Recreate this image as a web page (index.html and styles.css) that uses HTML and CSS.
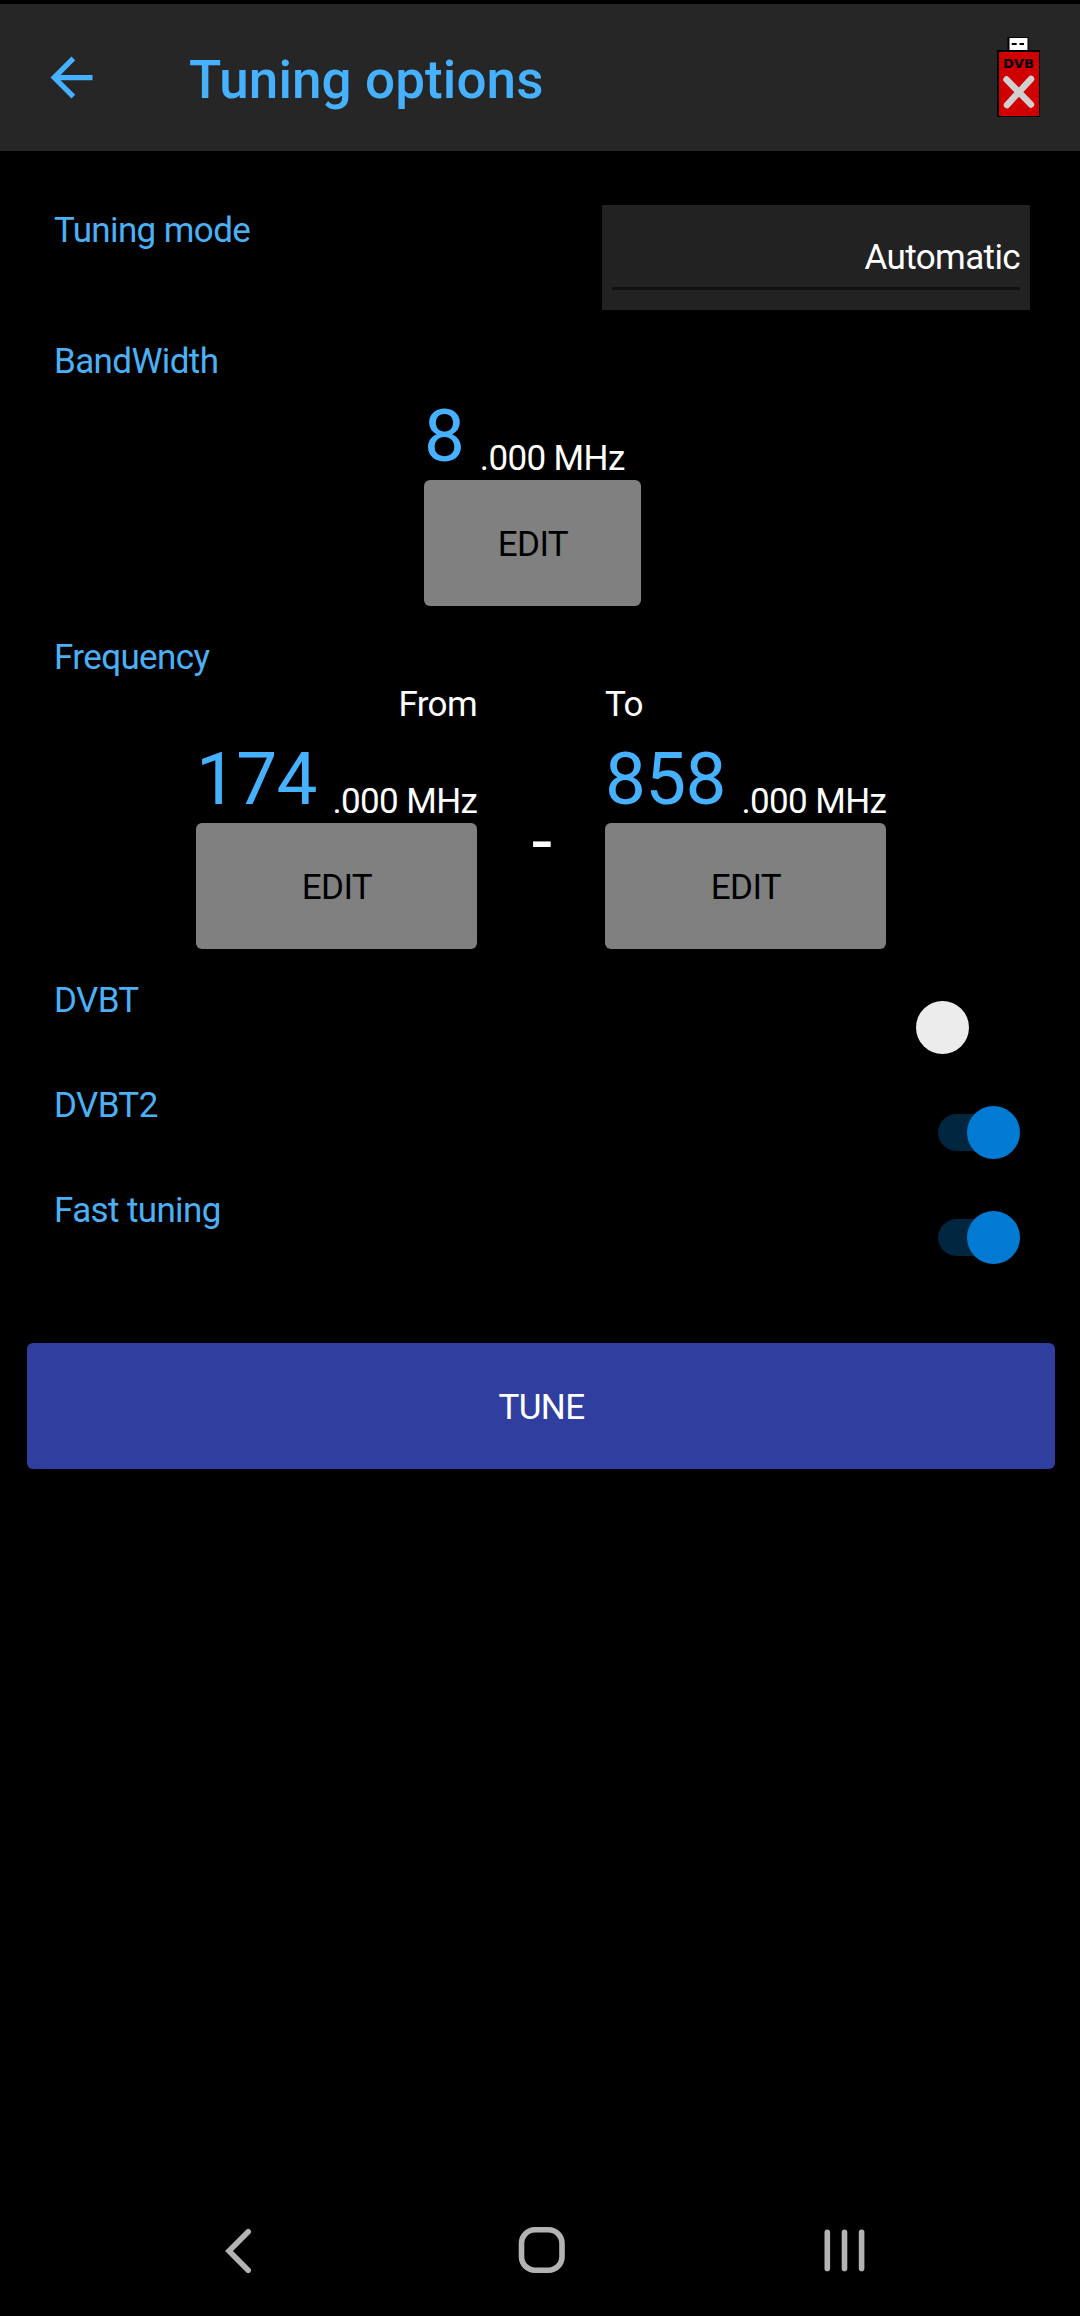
FILE: index.html
```html
<!DOCTYPE html>
<html lang="en">
<head>
<meta charset="utf-8">
<title>Tuning options</title>
<link rel="stylesheet" href="styles.css">
</head>
<body>
<header class="app-bar">
  <svg class="back" viewBox="0 0 24 24"><path d="M20 11H7.83l5.59-5.59L12 4l-8 8 8 8 1.41-1.41L7.83 13H20v-2z"/></svg>
  <h1 class="title">Tuning options</h1>
  <svg class="dongle" viewBox="0 0 43 80">
    <path d="M10.5 0h21v14h-21z" fill="#000"/>
    <path d="M12.5 1h18v12.5h-18z" fill="#fff"/>
    <path d="M14.7 6h5v2h-5zM22.5 6h4.5v2h-4.5z" fill="#000"/>
    <path d="M0 13h43v67H0z" fill="#000"/>
    <path d="M2 15h40v64H2z" fill="#d00000"/>
    <text class="dongle-text" x="6" y="30.7" textLength="31" lengthAdjust="spacingAndGlyphs">DVB</text>
    <path d="M9.5 42.5l24.5 25M34 42L10 68" stroke="#d0d0d0" stroke-width="6.5" stroke-linecap="round"/>
  </svg>
</header>
<main class="options">
  <section class="row row-mode">
    <span class="label">Tuning mode</span>
    <div class="spinner"><span class="spinner-value">Automatic</span></div>
  </section>
  <section class="row-bandwidth">
    <span class="label">BandWidth</span>
    <div class="field field-narrow">
      <div class="value"><span class="number">8</span><span class="unit">.000 MHz</span></div>
      <button class="edit">EDIT</button>
    </div>
  </section>
  <section class="row-frequency">
    <span class="label">Frequency</span>
    <div class="range">
      <div class="field">
        <span class="caption caption-end">From</span>
        <div class="value"><span class="number">174</span><span class="unit">.000 MHz</span></div>
        <button class="edit">EDIT</button>
      </div>
      <span class="dash">-</span>
      <div class="field">
        <span class="caption">To</span>
        <div class="value"><span class="number">858</span><span class="unit">.000 MHz</span></div>
        <button class="edit">EDIT</button>
      </div>
    </div>
  </section>
  <section class="row"><span class="label">DVBT</span><span class="switch"></span></section>
  <section class="row"><span class="label">DVBT2</span><span class="switch on"></span></section>
  <section class="row"><span class="label">Fast tuning</span><span class="switch on"></span></section>
</main>
<button class="tune">TUNE</button>
<nav class="nav-bar">
  <svg class="nav-icon" viewBox="0 0 60 60"><path d="M39.2 11.8L20 31l19.2 19.2"/></svg>
  <svg class="nav-icon" viewBox="0 0 60 60"><rect x="9.5" y="9.8" width="40.5" height="40.5" rx="13.5"/></svg>
  <svg class="nav-icon" viewBox="0 0 60 60"><path d="M13.3 12.2v36.2M30.5 12.2v36.2M47.6 12.2v36.2"/></svg>
</nav>
</body>
</html>
```
FILE: styles.css
```css
* { box-sizing: border-box; }

body {
  margin: 0;
  width: 1080px;
  height: 2316px;
  padding-top: 4px;
  display: flex;
  flex-direction: column;
  background: #000;
  color: #fff;
  font: 35px/42px Roboto, sans-serif;
  letter-spacing: -0.62px;
  overflow: hidden;
}

.app-bar {
  height: 147px;
  flex: none;
  display: flex;
  align-items: center;
  padding: 0 40px;
  background: #262626;
  color: #46b1ff;
}
.back { width: 63px; height: 63px; margin-top: -1px; fill: currentColor; }
.title {
  margin: 5px auto 0 86px;
  font-size: 53px;
  line-height: 62px;
  font-weight: 500;
  letter-spacing: 0.1px;
}
.dongle { width: 43px; height: 80px; margin-top: -1px; }
.dongle-text { font: bold 13px "DejaVu Sans", sans-serif; letter-spacing: 0; fill: #000; }

.options { padding: 54px 50px 0 54px; }
.label { display: block; padding-top: 5px; line-height: 42px; color: #4bb0f5; }

.row {
  height: 105px;
  display: flex;
  justify-content: space-between;
}
.row-mode { height: 131px; }
.row-bandwidth { height: 296px; }
.row-frequency { height: 343px; }

.spinner {
  width: 428px;
  height: 105px;
  padding: 32px 10px 20px;
  background: #222;
}
.spinner-value {
  display: block;
  height: 53px;
  border-bottom: 3px solid #111;
  text-align: right;
}

.field { width: 281px; display: flex; flex-direction: column; }
.field-narrow { width: 217px; margin: 9px 0 0 370px; }
.caption { margin: 5px 0 9px; }
.caption-end { text-align: right; }
.value {
  height: 88px;
  display: flex;
  align-items: flex-end;
  gap: 15.5px;
}
.number {
  font-size: 72.8px;
  line-height: 86px;
  padding-bottom: 1px;
  color: #46b1ff;
}
.unit { white-space: nowrap; }

.edit, .tune {
  height: 126px;
  flex: none;
  border: 0;
  border-radius: 6px;
  font: inherit;
  letter-spacing: inherit;
}
.edit { background: #808080; color: #000; padding: 4px 0 0 1px; }
.tune {
  margin: 53px 25px 0 27px;
  padding: 4px 0 0 1px;
  background: #303f9f;
  color: #fff;
}

.range { display: flex; margin-left: 142px; }
.dash {
  width: 128px;
  padding: 120px 0 0 1px;
  text-align: center;
  font-size: 73.5px;
  line-height: 86px;
}

.switch {
  position: relative;
  width: 104px;
  height: 53px;
  margin: 26px 10px 0 0;
}
.switch::after {
  content: "";
  position: absolute;
  top: 0;
  left: 0;
  width: 53px;
  height: 53px;
  border-radius: 50%;
  background: #ececec;
}
.switch.on::before {
  content: "";
  position: absolute;
  top: 8px;
  left: 22px;
  width: 82px;
  height: 37px;
  border-radius: 19px;
  background: #002640;
}
.switch.on::after { left: 51px; background: #007ad2; }

.nav-bar {
  margin-top: auto;
  height: 96px;
  padding: 0 206px 0 209px;
  display: flex;
  justify-content: space-between;
}
.nav-icon {
  width: 60px;
  height: 60px;
  fill: none;
  stroke: #b3b3b3;
  stroke-width: 5.6;
  stroke-linecap: round;
}
```
